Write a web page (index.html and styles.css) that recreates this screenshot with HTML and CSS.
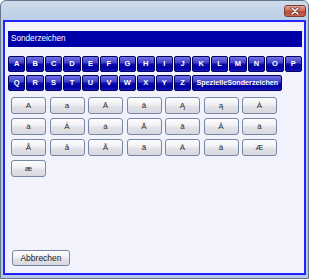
FILE: index.html
```html
<!DOCTYPE html>
<html lang="de">
<head>
<meta charset="utf-8">
<title>Sonderzeichen</title>
<link rel="stylesheet" href="styles.css">
</head>
<body>
<div class="window">
  <div class="titlebar">
    <div class="close">
      <svg width="12" height="8" viewBox="0 0 12 8"><path d="M3 1 L9 7 M9 1 L3 7" stroke="#5a2a2a" stroke-width="3" stroke-linecap="round"/><path d="M3 1 L9 7 M9 1 L3 7" stroke="#ffffff" stroke-width="1.6" stroke-linecap="round"/></svg>
    </div>
  </div>
  <div class="client">
    <div class="header">Sonderzeichen</div>
    <div class="letters">
      <button class="lb">A</button><button class="lb">B</button><button class="lb">C</button><button class="lb">D</button>
      <button class="lb">E</button><button class="lb">F</button><button class="lb">G</button><button class="lb">H</button>
      <button class="lb">I</button><button class="lb">J</button><button class="lb">K</button><button class="lb">L</button>
      <button class="lb">M</button><button class="lb">N</button><button class="lb">O</button><button class="lb">P</button>
      <button class="lb">Q</button><button class="lb">R</button><button class="lb">S</button><button class="lb">T</button>
      <button class="lb">U</button><button class="lb">V</button><button class="lb">W</button><button class="lb">X</button>
      <button class="lb">Y</button><button class="lb">Z</button>
      <button class="lb special">SpezielleSonderzeichen</button>
    </div>
    <div class="chars">
      <button class="cb">A</button><button class="cb">a</button><button class="cb">Ā</button><button class="cb">ā</button><button class="cb">Ą</button><button class="cb">ą</button><button class="cb">À</button>
      <button class="cb">à</button><button class="cb">Á</button><button class="cb">á</button><button class="cb">Ă</button><button class="cb">ă</button><button class="cb">Â</button><button class="cb">â</button>
      <button class="cb">Å</button><button class="cb">å</button><button class="cb">Ã</button><button class="cb">ã</button><button class="cb">Ä</button><button class="cb">ä</button><button class="cb">Æ</button>
      <button class="cb">æ</button>
    </div>
    <button class="cancel">Abbrechen</button>
  </div>
</div>
</body>
</html>
```
FILE: styles.css
```css
html, body {
  margin: 0;
  padding: 0;
  background: #ffffff;
}
.window {
  width: 309px;
  height: 279px;
  box-sizing: border-box;
  border: 1px solid #64768a;
  border-radius: 6px 6px 0 0;
  background: linear-gradient(#cddcec, #b9cde4 20px, #b4cae2);
  padding: 0 2px 3px 2px;
  display: flex;
  flex-direction: column;
  font-family: "DejaVu Sans", "Liberation Sans", sans-serif;
}
.titlebar {
  height: 19px;
  flex: none;
  display: flex;
  justify-content: flex-end;
  align-items: flex-start;
  padding-top: 4px;
  box-sizing: border-box;
}
.close {
  width: 22px;
  height: 12px;
  box-sizing: border-box;
  border: 1px solid #7a3a34;
  border-radius: 3px;
  background: linear-gradient(#e8a898, #d06a58 45%, #c04a38 55%, #c86050);
  display: flex;
  align-items: center;
  justify-content: center;
}
.client {
  flex: 1;
  border: 2px solid #2424ff;
  background: #f2f2fc;
  padding: 9px 2px 7px 3px;
  display: flex;
  flex-direction: column;
  min-height: 0;
}
.header {
  height: 16px;
  background: #0000a8;
  color: #ffffff;
  font-family: "Liberation Sans", sans-serif;
  font-size: 8.2px;
  line-height: 16px;
  padding-left: 3px;
  flex: none;
}
.letters {
  margin-top: 9px;
  display: grid;
  grid-template-columns: repeat(16, 1fr);
  grid-auto-rows: 16px;
  column-gap: 1px;
  row-gap: 3px;
}
.lb {
  margin: 0;
  padding: 0;
  height: 16px;
  box-sizing: border-box;
  border: 1px solid #00005e;
  border-radius: 2px;
  background: linear-gradient(#7272e4, #4242cc 40%, #0c0ca8 52%, #0000a4 80%, #1a1ac4);
  color: #ffffff;
  font-family: "Liberation Sans", sans-serif;
  font-weight: bold;
  font-size: 7.5px;
  line-height: 14px;
  text-align: center;
}
.lb.special {
  grid-column: span 5;
  justify-self: start;
  padding: 0 3px;
  font-size: 7.2px;
}
.chars {
  margin: 6px 0 0 3px;
  display: grid;
  grid-template-columns: repeat(7, 35px);
  grid-auto-rows: 17px;
  column-gap: 3.5px;
  row-gap: 4px;
}
.cb, .cancel {
  margin: 0;
  padding: 0;
  box-sizing: border-box;
  border: 1px solid #7686a4;
  border-radius: 3px;
  background: linear-gradient(#fefefe, #f0f0f4 45%, #e2e2e8 55%, #d8d8e0);
  color: #282828;
  font-family: "Liberation Sans", sans-serif;
  font-size: 8px;
  text-align: center;
}
.cb {
  height: 17px;
  line-height: 15px;
}
.cancel {
  margin-top: auto;
  margin-left: 4px;
  align-self: flex-start;
  width: 58px;
  height: 16px;
  line-height: 14px;
  color: #202020;
  font-size: 8.5px;
}
```
